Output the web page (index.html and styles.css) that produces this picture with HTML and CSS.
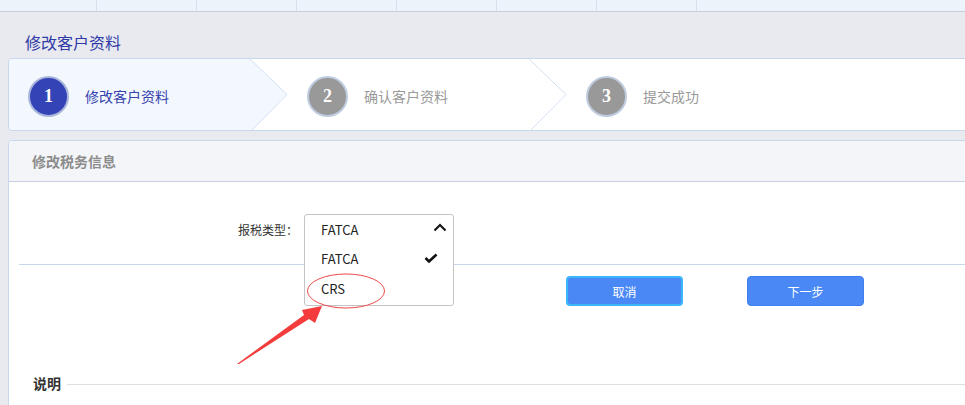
FILE: index.html
```html
<!DOCTYPE html>
<html lang="zh-CN">
<head>
<meta charset="utf-8">
<title>修改客户资料</title>
<link rel="stylesheet" href="styles.css">
</head>
<body>
<div class="page">
  <div class="topbar">
    <span class="tab first"></span><span class="tab"></span><span class="tab"></span><span class="tab"></span><span class="tab"></span><span class="tab"></span><span class="tab"></span>
  </div>

  <h1 class="page-title">修改客户资料</h1>

  <div class="steps">
    <div class="step active">
      <div class="step-body">
        <span class="step-num">1</span>
        <span class="step-label">修改客户资料</span>
      </div>
      <svg class="chev" width="38" height="71" viewBox="0 0 38 71">
        <polygon points="0,0 37,35.5 2,71 0,71" fill="#f3f8ff"/>
        <polyline points="0,0 37,35.5 2,71" fill="none" stroke="#d2e0f2" stroke-width="1"/>
      </svg>
    </div>
    <div class="step">
      <div class="step-body">
        <span class="step-num">2</span>
        <span class="step-label">确认客户资料</span>
      </div>
      <svg class="chev" width="38" height="71" viewBox="0 0 38 71">
        <polyline points="0,0 37,35.5 2,71" fill="none" stroke="#d2e0f2" stroke-width="1"/>
      </svg>
    </div>
    <div class="step">
      <div class="step-body">
        <span class="step-num">3</span>
        <span class="step-label">提交成功</span>
      </div>
    </div>
  </div>

  <div class="panel">
    <div class="panel-head">修改税务信息</div>
    <div class="panel-body">
      <div class="form-row">
        <label class="form-label">报税类型：</label>
        <div class="select-wrap">
          <div class="select-box">
            <div class="select-current">
              <span>FATCA</span>
              <svg class="chevron-up" width="14" height="9" viewBox="0 0 14 9"><polyline points="1.5,7.5 7,2 12.5,7.5" fill="none" stroke="#111" stroke-width="2"/></svg>
            </div>
            <div class="option selected">
              <span>FATCA</span>
              <svg class="check" width="14" height="10" viewBox="0 0 14 10"><polyline points="1.5,5 5,8.5 12.5,1.5" fill="none" stroke="#111" stroke-width="2.6"/></svg>
            </div>
            <div class="option">
              <span>CRS</span>
            </div>
          </div>
        </div>
      </div>
      <div class="divider"></div>
      <div class="actions">
        <button class="btn btn-cancel">取消</button>
        <button class="btn btn-next">下一步</button>
      </div>
      <div class="section-title">
        <span>说明</span>
        <span class="section-line"></span>
      </div>
    </div>
  </div>

  <svg class="annotation" width="965" height="405" viewBox="0 0 965 405">
    <ellipse cx="346" cy="291" rx="38.5" ry="17" fill="none" stroke="#ee4a4a" stroke-width="1"/>
    <polygon points="237,364 304,315 302,310 322,306 315,323 309,319 239,364" fill="#f43c3c"/>
  </svg>
</div>
</body>
</html>
```

FILE: styles.css
```css
* { box-sizing: border-box; }

html, body {
  margin: 0;
  padding: 0;
}

body {
  background: #e9eaf0;
  font-family: "Noto Sans CJK SC", "Noto Sans", sans-serif;
  color: #333;
  overflow: hidden;
  width: 965px;
  height: 405px;
}

.page {
  position: relative;
  width: 965px;
  height: 405px;
  overflow: hidden;
}

.topbar {
  display: flex;
  height: 12px;
  background: #ecf3fb;
  border-bottom: 1px solid #c6d0dd;
}

.tab {
  flex: none;
  width: 100px;
  border-right: 1px solid #d8e0ea;
}

.tab.first { width: 97px; }

.page-title {
  margin: 18px 0 4px 25px;
  font-size: 16px;
  line-height: 24px;
  font-weight: normal;
  color: #2f3aa6;
}

.steps {
  display: flex;
  margin-left: 8px;
  margin-right: -20px;
  height: 73px;
  background: #fff;
  border: 1px solid #c8d8ec;
  border-radius: 4px 0 0 4px;
}

.step {
  display: flex;
  flex: none;
  width: 279px;
}

.step-body {
  flex: 1;
  display: flex;
  align-items: center;
  gap: 16px;
  padding-left: 19px;
  padding-top: 3px;
}

.step.active .step-body {
  background: #f3f8ff;
  border-radius: 4px 0 0 4px;
}

.chev { flex: none; display: block; }

.step-num {
  width: 41px;
  height: 41px;
  border-radius: 50%;
  background: #999;
  border: 2px solid #bfcce0;
  display: flex;
  align-items: center;
  justify-content: center;
  color: #fff;
  font-family: "Liberation Serif", serif;
  font-weight: bold;
  font-size: 18px;
}

.step.active .step-num {
  background: #3444b7;
  border-color: #aab6da;
}

.step-label {
  font-size: 14px;
  color: #999;
}

.step.active .step-label { color: #3642ad; }

.panel {
  margin: 9px -20px 0 8px;
  background: #fff;
  border: 1px solid #c8d8ec;
  border-radius: 4px 0 0 0;
  height: 300px;
}

.panel-head {
  height: 41px;
  line-height: 40px;
  padding-left: 23px;
  background: #f4f5f9;
  border-bottom: 1px solid #c4d2e4;
  font-size: 14px;
  font-weight: bold;
  color: #8c8c8c;
  border-radius: 4px 0 0 0;
}

.panel-body {
  padding: 32px 0 0 10px;
}

.form-row {
  display: flex;
  align-items: center;
  height: 30px;
  padding-left: 219px;
}

.form-label {
  font-size: 12px;
  color: #333;
  margin-right: 6px;
}

.select-wrap {
  position: relative;
  width: 150px;
  height: 30px;
}

.select-box {
  position: absolute;
  top: 0;
  left: 0;
  width: 150px;
  background: #fff;
  border: 1px solid #c4c4c4;
  border-radius: 3px;
  z-index: 2;
  font-size: 13px;
  color: #222;
}

.select-current, .option {
  display: flex;
  align-items: center;
  justify-content: space-between;
  padding: 0 15px 0 16px;
}

.select-current { height: 28px; padding-right: 6px; }
.option { height: 30px; }
.option:last-child { height: 32px; padding-bottom: 2px; }

.chevron-up { margin-top: -4px; }

.divider {
  margin-top: 20px;
  height: 1px;
  background: #c6d7ec;
}

.actions {
  display: flex;
  gap: 64px;
  margin-top: 11px;
  padding-left: 547px;
}

.btn {
  width: 117px;
  height: 30px;
  border-radius: 4px;
  background: #4a89f5;
  color: #fff;
  font-family: "Noto Sans CJK SC", sans-serif;
  font-size: 12px;
  padding: 0;
  cursor: pointer;
}

.btn-cancel { border: 2px solid #3cb6fb; }
.btn-next { border: 1px solid #3d7ff0; }

.section-title {
  display: flex;
  align-items: center;
  gap: 6px;
  margin-top: 67px;
  padding-left: 14px;
  font-size: 14px;
  font-weight: bold;
  color: #333;
  line-height: 20px;
}

.section-line {
  flex: 1;
  height: 1px;
  background: #dedfe3;
  margin-top: 2px;
}

.annotation {
  position: absolute;
  top: 0;
  left: 0;
  pointer-events: none;
  z-index: 5;
}
```
